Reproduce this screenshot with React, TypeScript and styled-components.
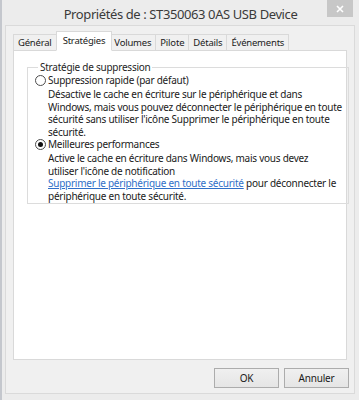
import React from 'react'
import styled, { createGlobalStyle } from 'styled-components'

const GlobalStyle = createGlobalStyle`
  html, body {
    margin: 0;
    padding: 0;
    background: #ececec;
  }
  body {
    font-family: "Noto Sans", "Open Sans", sans-serif;
    font-size: 10px;
    letter-spacing: -0.25px;
    color: #1a1a1a;
  }
`

const tabs = ['Général', 'Stratégies', 'Volumes', 'Pilote', 'Détails', 'Événements']

const App: React.FC = () => {
  const [active, setActive] = React.useState('Stratégies')
  const [policy, setPolicy] = React.useState('perf')

  return (
    <>
      <GlobalStyle />
      <Window>
        <TitleBar>
          <span />
          <Title>Propriétés de : ST350063 0AS USB Device</Title>
          <CloseButton aria-label="Fermer">
            <svg width="8" height="8" viewBox="0 0 8 8">
              <path d="M1 1 L7 7 M7 1 L1 7" stroke="#fff" strokeWidth="1.6" />
            </svg>
          </CloseButton>
        </TitleBar>
        <Client>
          <TabStrip>
            {tabs.map((t) => (
              <Tab key={t} $active={t === active} onClick={() => setActive(t)}>
                {t}
              </Tab>
            ))}
          </TabStrip>
          <TabPanel>
            <GroupBox>
              <Legend>Stratégie de suppression</Legend>
              <Option>
                <Radio $checked={policy === 'quick'} onClick={() => setPolicy('quick')} />
                <OptionBody>
                  <OptionLabel onClick={() => setPolicy('quick')}>Suppression rapide (par défaut)</OptionLabel>
                  <Description>
                    Désactive le cache en écriture sur le périphérique et dans
                    <br />
                    Windows, mais vous pouvez déconnecter le périphérique en toute
                    <br />
                    sécurité sans utiliser l'icône Supprimer le périphérique en toute
                    <br />
                    sécurité.
                  </Description>
                </OptionBody>
              </Option>
              <Option>
                <Radio $checked={policy === 'perf'} onClick={() => setPolicy('perf')} />
                <OptionBody>
                  <OptionLabel onClick={() => setPolicy('perf')}>Meilleures performances</OptionLabel>
                  <Description>
                    Active le cache en écriture dans Windows, mais vous devez
                    <br />
                    utiliser l'icône de notification
                    <br />
                    <Link href="#">Supprimer le périphérique en toute sécurité</Link> pour déconnecter le
                    <br />
                    périphérique en toute sécurité.
                  </Description>
                </OptionBody>
              </Option>
            </GroupBox>
          </TabPanel>
          <ButtonRow>
            <Button>OK</Button>
            <Button>Annuler</Button>
          </ButtonRow>
        </Client>
      </Window>
    </>
  )
}

const Window = styled.div`
  width: 359px;
  height: 400px;
  box-sizing: border-box;
  display: flex;
  flex-direction: column;
  background: #ececec;
  border-left: 2px solid #c4c7cd;
`

const TitleBar = styled.div`
  height: 25px;
  display: grid;
  grid-template-columns: 1fr auto 1fr;
  align-items: start;
`

const Title = styled.div`
  font-size: 13px;
  color: #3a3a3a;
  line-height: 14px;
  padding-top: 7px;
  letter-spacing: -0.4px;
`

const CloseButton = styled.div`
  justify-self: end;
  width: 26px;
  height: 17px;
  margin-right: 6px;
  background: #c7c7c7;
  display: flex;
  align-items: center;
  justify-content: center;
`

const Client = styled.div`
  flex: 1;
  margin: 0 4px 6px 3px;
  border: 1px solid #dadada;
  background: #f0f0f0;
  display: flex;
  flex-direction: column;
  padding: 5px 7px 0 7px;
`

const TabStrip = styled.div`
  display: flex;
  align-items: flex-end;
  height: 20px;
  position: relative;
  z-index: 1;
  margin-bottom: -1px;
`

const Tab = styled.div<{ $active: boolean }>`
  box-sizing: border-box;
  height: ${(p) => (p.$active ? '20px' : '17px')};
  padding: ${(p) => (p.$active ? '1px 6px 0' : '0 4px')};
  margin: ${(p) => (p.$active ? '0 -2px' : '0')};
  position: relative;
  z-index: ${(p) => (p.$active ? 2 : 1)};
  border: 1px solid #d9d9d9;
  border-bottom: ${(p) => (p.$active ? '1px solid #fff' : '1px solid #d9d9d9')};
  margin-left: -1px;
  background: ${(p) => (p.$active ? '#fff' : '#f0f0f0')};
  line-height: 15px;
  font-size: 9.5px;
  letter-spacing: -0.2px;
  color: #1a1a1a;
  white-space: nowrap;
  cursor: default;
  &:first-child {
    margin-left: 0;
  }
`

const TabPanel = styled.div`
  height: 310px;
  box-sizing: border-box;
  background: #fff;
  border: 1px solid #d9d9d9;
  padding: 10px 9px 0 13px;
`

const GroupBox = styled.fieldset`
  margin: 0;
  padding: 0 6px 1px 7px;
  border: 1px solid #dcdcdc;
`

const Legend = styled.legend`
  padding: 0 2px;
  margin-left: 3px;
  line-height: 12px;
  color: #1e1e1e;
`

const Option = styled.div`
  display: flex;
  gap: 2px;
  align-items: flex-start;
  margin-top: 1px;
  & + & {
    margin-top: 0;
  }
`

const Radio = styled.div<{ $checked: boolean }>`
  box-sizing: border-box;
  width: 11px;
  height: 11px;
  margin-top: 1px;
  border-radius: 50%;
  border: 1px solid #4d4d4d;
  background: #fff;
  flex: none;
  display: flex;
  align-items: center;
  justify-content: center;
  &::after {
    content: '';
    width: 5px;
    height: 5px;
    border-radius: 50%;
    background: ${(p) => (p.$checked ? '#111' : 'transparent')};
  }
`

const OptionBody = styled.div`
  display: flex;
  flex-direction: column;
  white-space: nowrap;
`

const OptionLabel = styled.div`
  line-height: 13px;
  color: #1a1a1a;
`

const Description = styled.div`
  margin-top: 1px;
  line-height: 12.5px;
  color: #1a1a1a;
`

const Link = styled.a`
  color: #2f6fc8;
  text-decoration: underline;
`

const ButtonRow = styled.div`
  display: flex;
  justify-content: flex-end;
  gap: 5px;
  padding: 8px 0 0;
  margin-right: -2px;
`

const Button = styled.button`
  width: 65px;
  height: 20px;
  box-sizing: border-box;
  border: 1px solid #acacac;
  background: linear-gradient(#f0f0f0, #e5e5e5);
  font-family: "Noto Sans", "Open Sans", sans-serif;
  font-size: 10px;
  letter-spacing: -0.2px;
  color: #1a1a1a;
  padding: 0;
`

export default App
